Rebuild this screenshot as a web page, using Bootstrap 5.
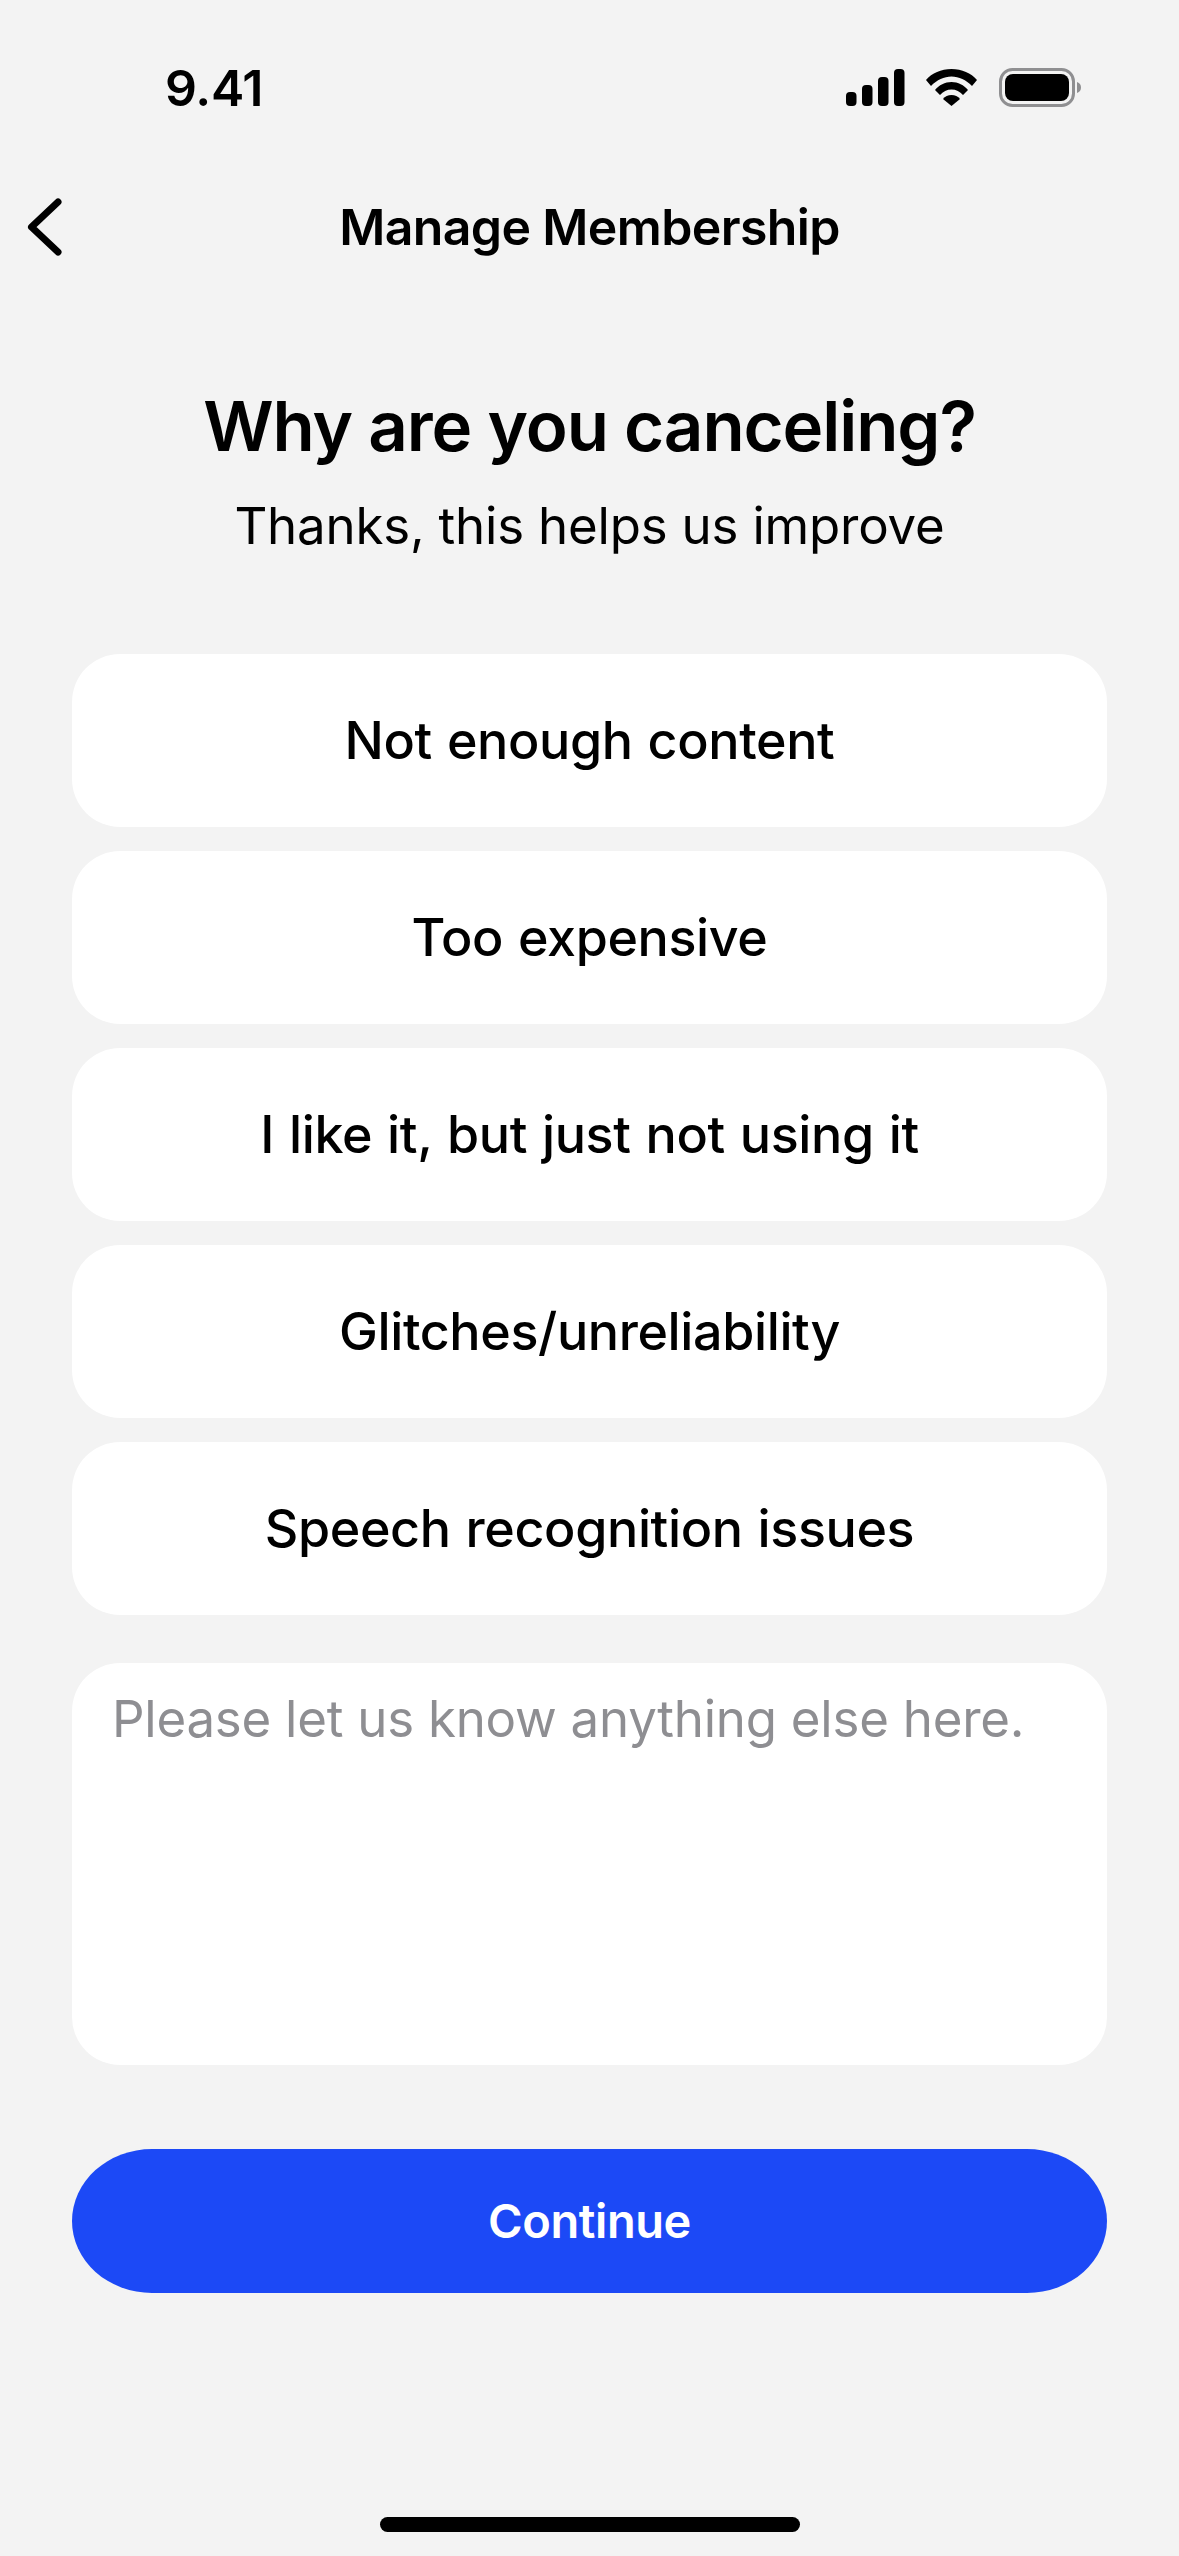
<!DOCTYPE html>
<html lang="en">
<head>
<meta charset="utf-8">
<title>Manage Membership</title>
<link rel="stylesheet" href="https://cdn.jsdelivr.net/npm/bootstrap@5.3.0/dist/css/bootstrap.min.css">
<style>
html,body{height:2556px;background:#f3f3f3;font-family:Inter,"Liberation Sans",sans-serif;color:#000;}
.screen{width:1179px;height:2556px;overflow:hidden;}
.statusline{height:134px;padding:50px 89px 0 165px;}
.clock{font-size:50px;font-weight:600;line-height:76px;letter-spacing:-.3px;}
.topnav{height:186px;padding:0 0 0 24px;position:relative;}
.backbtn{width:44px;height:72px;}
.navtitle{font-size:50px;font-weight:600;line-height:60px;letter-spacing:-.62px;position:absolute;left:0;right:0;text-align:center;margin:0;}
.heading{margin:64px 0 0;font-size:69px;font-weight:600;line-height:84px;letter-spacing:-1.1px;text-align:center;}
.subheading{margin:21px 0 0;font-size:51px;line-height:74px;letter-spacing:-.2px;text-align:center;}
.formwrap{margin:91px 72px 0;}
.choice{height:173px;border-radius:48px;background:#fff;border:0;width:100%;font-size:52px;font-weight:500;letter-spacing:-.38px;word-spacing:1.5px;color:#000;}
.choices{gap:24px;}
.notes{height:402px;margin-top:48px;border-radius:48px;border:0;background:#fff;padding:23px 40px;font-size:51px;line-height:66px;letter-spacing:-.24px;resize:none;}
.notes::placeholder{color:#8e8e92;opacity:1;}
.notes:focus{box-shadow:none;background:#fff;}
.cta{height:144px;margin-top:84px;border-radius:80px / 72px;background:#1c49f6;border:0;width:100%;color:#fff;font-size:47px;font-weight:600;letter-spacing:-.4px;}
.cta:hover,.cta:active{background:#1c49f6!important;color:#fff!important;}
.homebar{width:420px;height:15px;border-radius:8px;background:#000;margin:224px auto 0;}
</style>
</head>
<body>
<div class="screen d-flex flex-column">
  <div class="statusline d-flex justify-content-between align-items-start">
    <span class="clock">9.41</span>
    <svg width="244" height="64" viewBox="846 54 244 64" class="mt-1" aria-hidden="true">
      <rect x="846" y="92" width="10.500" height="14" rx="4" fill="#000"/>
      <rect x="862" y="85" width="10.500" height="21" rx="4" fill="#000"/>
      <rect x="878" y="77" width="10.500" height="29" rx="4" fill="#000"/>
      <rect x="894" y="69" width="10.500" height="37" rx="4" fill="#000"/>
      <path d="M926 80C932 73 941 69 951.500 69C962 69 971 73 977 80L972 86C966 80 959 76.500 951.500 76.500C944 76.500 937 80 931 86Z" fill="#000"/>
      <path d="M935 90C939 85 945 82 951.500 82C958 82 964 85 968 90L963 95C960 91.500 956 89.500 951.500 89.500C947 89.500 943 91.500 940 95Z" fill="#000"/>
      <path d="M943 99C945 96.500 948 95 951.500 95C955 95 958 96.500 960 99L951.500 106Z" fill="#000"/>
      <rect x="1000.500" y="69.500" width="73" height="36" rx="12" fill="none" stroke="#8f8f91" stroke-width="3"/>
      <rect x="1005" y="74" width="64" height="27" rx="8" fill="#000"/>
      <path d="M1077 82c3 1 4 3 4 5.500s-1 4.500-4 5.500z" fill="#8f8f91"/>
    </svg>
  </div>
  <div class="topnav d-flex align-items-center">
    <svg class="backbtn" viewBox="24 191 44 72" aria-hidden="true"><path d="M58 202 31.500 227 58 252" fill="none" stroke="#000" stroke-width="7" stroke-linecap="round" stroke-linejoin="round"/></svg>
    <h1 class="navtitle">Manage Membership</h1>
  </div>
  <h2 class="heading">Why are you canceling?</h2>
  <p class="subheading">Thanks, this helps us improve</p>
  <form class="formwrap d-flex flex-column">
    <div class="choices d-flex flex-column">
      <button type="button" class="btn choice">Not enough content</button>
      <button type="button" class="btn choice">Too expensive</button>
      <button type="button" class="btn choice">I like it, but just not using it</button>
      <button type="button" class="btn choice">Glitches/unreliability</button>
      <button type="button" class="btn choice">Speech recognition issues</button>
    </div>
    <textarea class="form-control notes" placeholder="Please let us know anything else here."></textarea>
    <button type="button" class="btn cta">Continue</button>
  </form>
  <div class="homebar"></div>
</div>
<script src="https://cdn.jsdelivr.net/npm/bootstrap@5.3.0/dist/js/bootstrap.bundle.min.js"></script>
</body>
</html>
